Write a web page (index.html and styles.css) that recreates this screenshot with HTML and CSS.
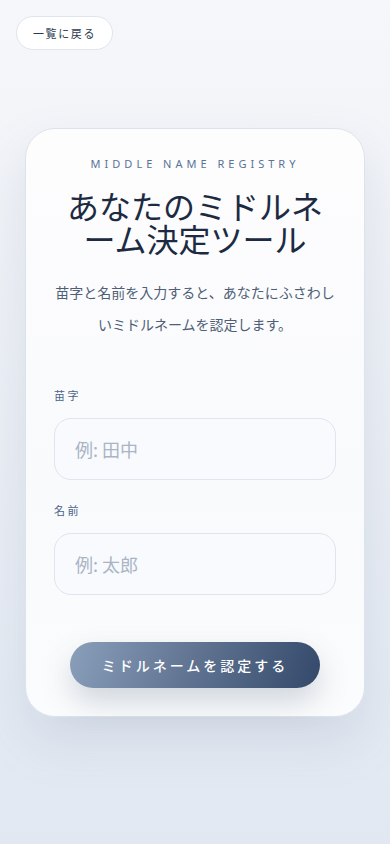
FILE: index.html
```html
<!DOCTYPE html>
<html lang="ja">
<head>
    <meta charset="UTF-8">
    <meta name="viewport" content="width=device-width, initial-scale=1.0">
    <title>ミドルネーム決定ツール</title>
    <link rel="stylesheet" href="styles.css">
</head>
<body>
    <div class="page">
        <div class="top-bar">
            <button class="back-btn">一覧に戻る</button>
        </div>

        <div class="card">
            <div class="eyebrow">MIDDLE NAME REGISTRY</div>
            <h1 class="title">あなたのミドルネーム決定ツール</h1>
            <p class="lead">苗字と名前を入力すると、あなたにふさわしいミドルネームを認定します。</p>

            <form class="form" onsubmit="return false;">
                <label class="field">
                    <span class="field-label">苗字</span>
                    <input class="field-input" type="text" placeholder="例: 田中">
                </label>
                <label class="field">
                    <span class="field-label">名前</span>
                    <input class="field-input" type="text" placeholder="例: 太郎">
                </label>
                <div class="actions">
                    <button class="submit-btn" type="submit">ミドルネームを認定する</button>
                </div>
            </form>
        </div>
    </div>
</body>
</html>
```

FILE: styles.css
```css
:root {
    --bg-top: #f6f7fa;
    --bg-bottom: #e1e8f1;
    --text-main: #1d2b42;
    --text-sub: #4f5e75;
    --accent: #5a7296;
    --line: #dfe5ee;
    --placeholder: #a9b4c4;
}

* {
    box-sizing: border-box;
}

body {
    margin: 0;
    min-height: 100vh;
    background: linear-gradient(180deg, var(--bg-top) 0%, #eef1f6 35%, var(--bg-bottom) 100%);
    font-family: 'Noto Sans', 'Noto Sans CJK JP', sans-serif;
    color: var(--text-main);
}

.page {
    padding: 16px;
}

.top-bar {
    display: flex;
}

.back-btn {
    font-family: inherit;
    font-size: 11px;
    letter-spacing: 1.6px;
    color: #2c3a50;
    background: #fff;
    border: 1px solid var(--line);
    border-radius: 999px;
    height: 34px;
    padding: 0 16px;
    cursor: pointer;
}

.card {
    max-width: 340px;
    margin: 78px auto 0;
    padding: 26px 28px 28px;
    background: linear-gradient(180deg, #fdfdfe 0%, #f9fafc 60%, #fbfcfd 100%);
    border: 1px solid #dde3eb;
    border-radius: 30px;
    box-shadow: 0 24px 50px rgba(120, 140, 170, 0.18);
    text-align: center;
}

.eyebrow {
    font-size: 11px;
    line-height: 18px;
    letter-spacing: 4px;
    color: var(--accent);
}

.title {
    margin: 16px 0 0;
    font-family: 'Noto Sans CJK JP', sans-serif;
    font-size: 32px;
    font-weight: 400;
    line-height: 33px;
    color: var(--text-main);
    padding: 0 10px;
}

.lead {
    margin: 21px 0 0;
    font-family: 'Noto Sans CJK JP', sans-serif;
    font-size: 14px;
    line-height: 32px;
    color: var(--text-sub);
}

.form {
    margin-top: 47px;
    text-align: left;
}

.field {
    display: flex;
    flex-direction: column;
    gap: 15px;
    margin-bottom: 22px;
}

.field-label {
    font-family: 'Noto Sans CJK JP', sans-serif;
    font-size: 11px;
    line-height: 16px;
    letter-spacing: 2.5px;
    color: #4a6388;
}

.field-input {
    height: 62px;
    width: 100%;
    padding: 0 20px;
    font-family: 'Noto Sans CJK JP', sans-serif;
    font-size: 18px;
    color: var(--text-main);
    background: #f8fafe;
    border: 1px solid var(--line);
    border-radius: 17px;
    outline: none;
}

.field-input::placeholder {
    color: var(--placeholder);
}

.actions {
    display: flex;
    justify-content: center;
    padding-top: 25px;
}

.submit-btn {
    width: 250px;
    height: 46px;
    font-family: 'Noto Sans CJK JP', sans-serif;
    font-size: 14px;
    font-weight: 500;
    letter-spacing: 3px;
    color: #fff;
    background: linear-gradient(110deg, #8a9fba 0%, #5f7391 50%, #34496a 100%);
    border: none;
    border-radius: 999px;
    box-shadow: 0 14px 30px rgba(60, 80, 110, 0.22);
    cursor: pointer;
}
```
